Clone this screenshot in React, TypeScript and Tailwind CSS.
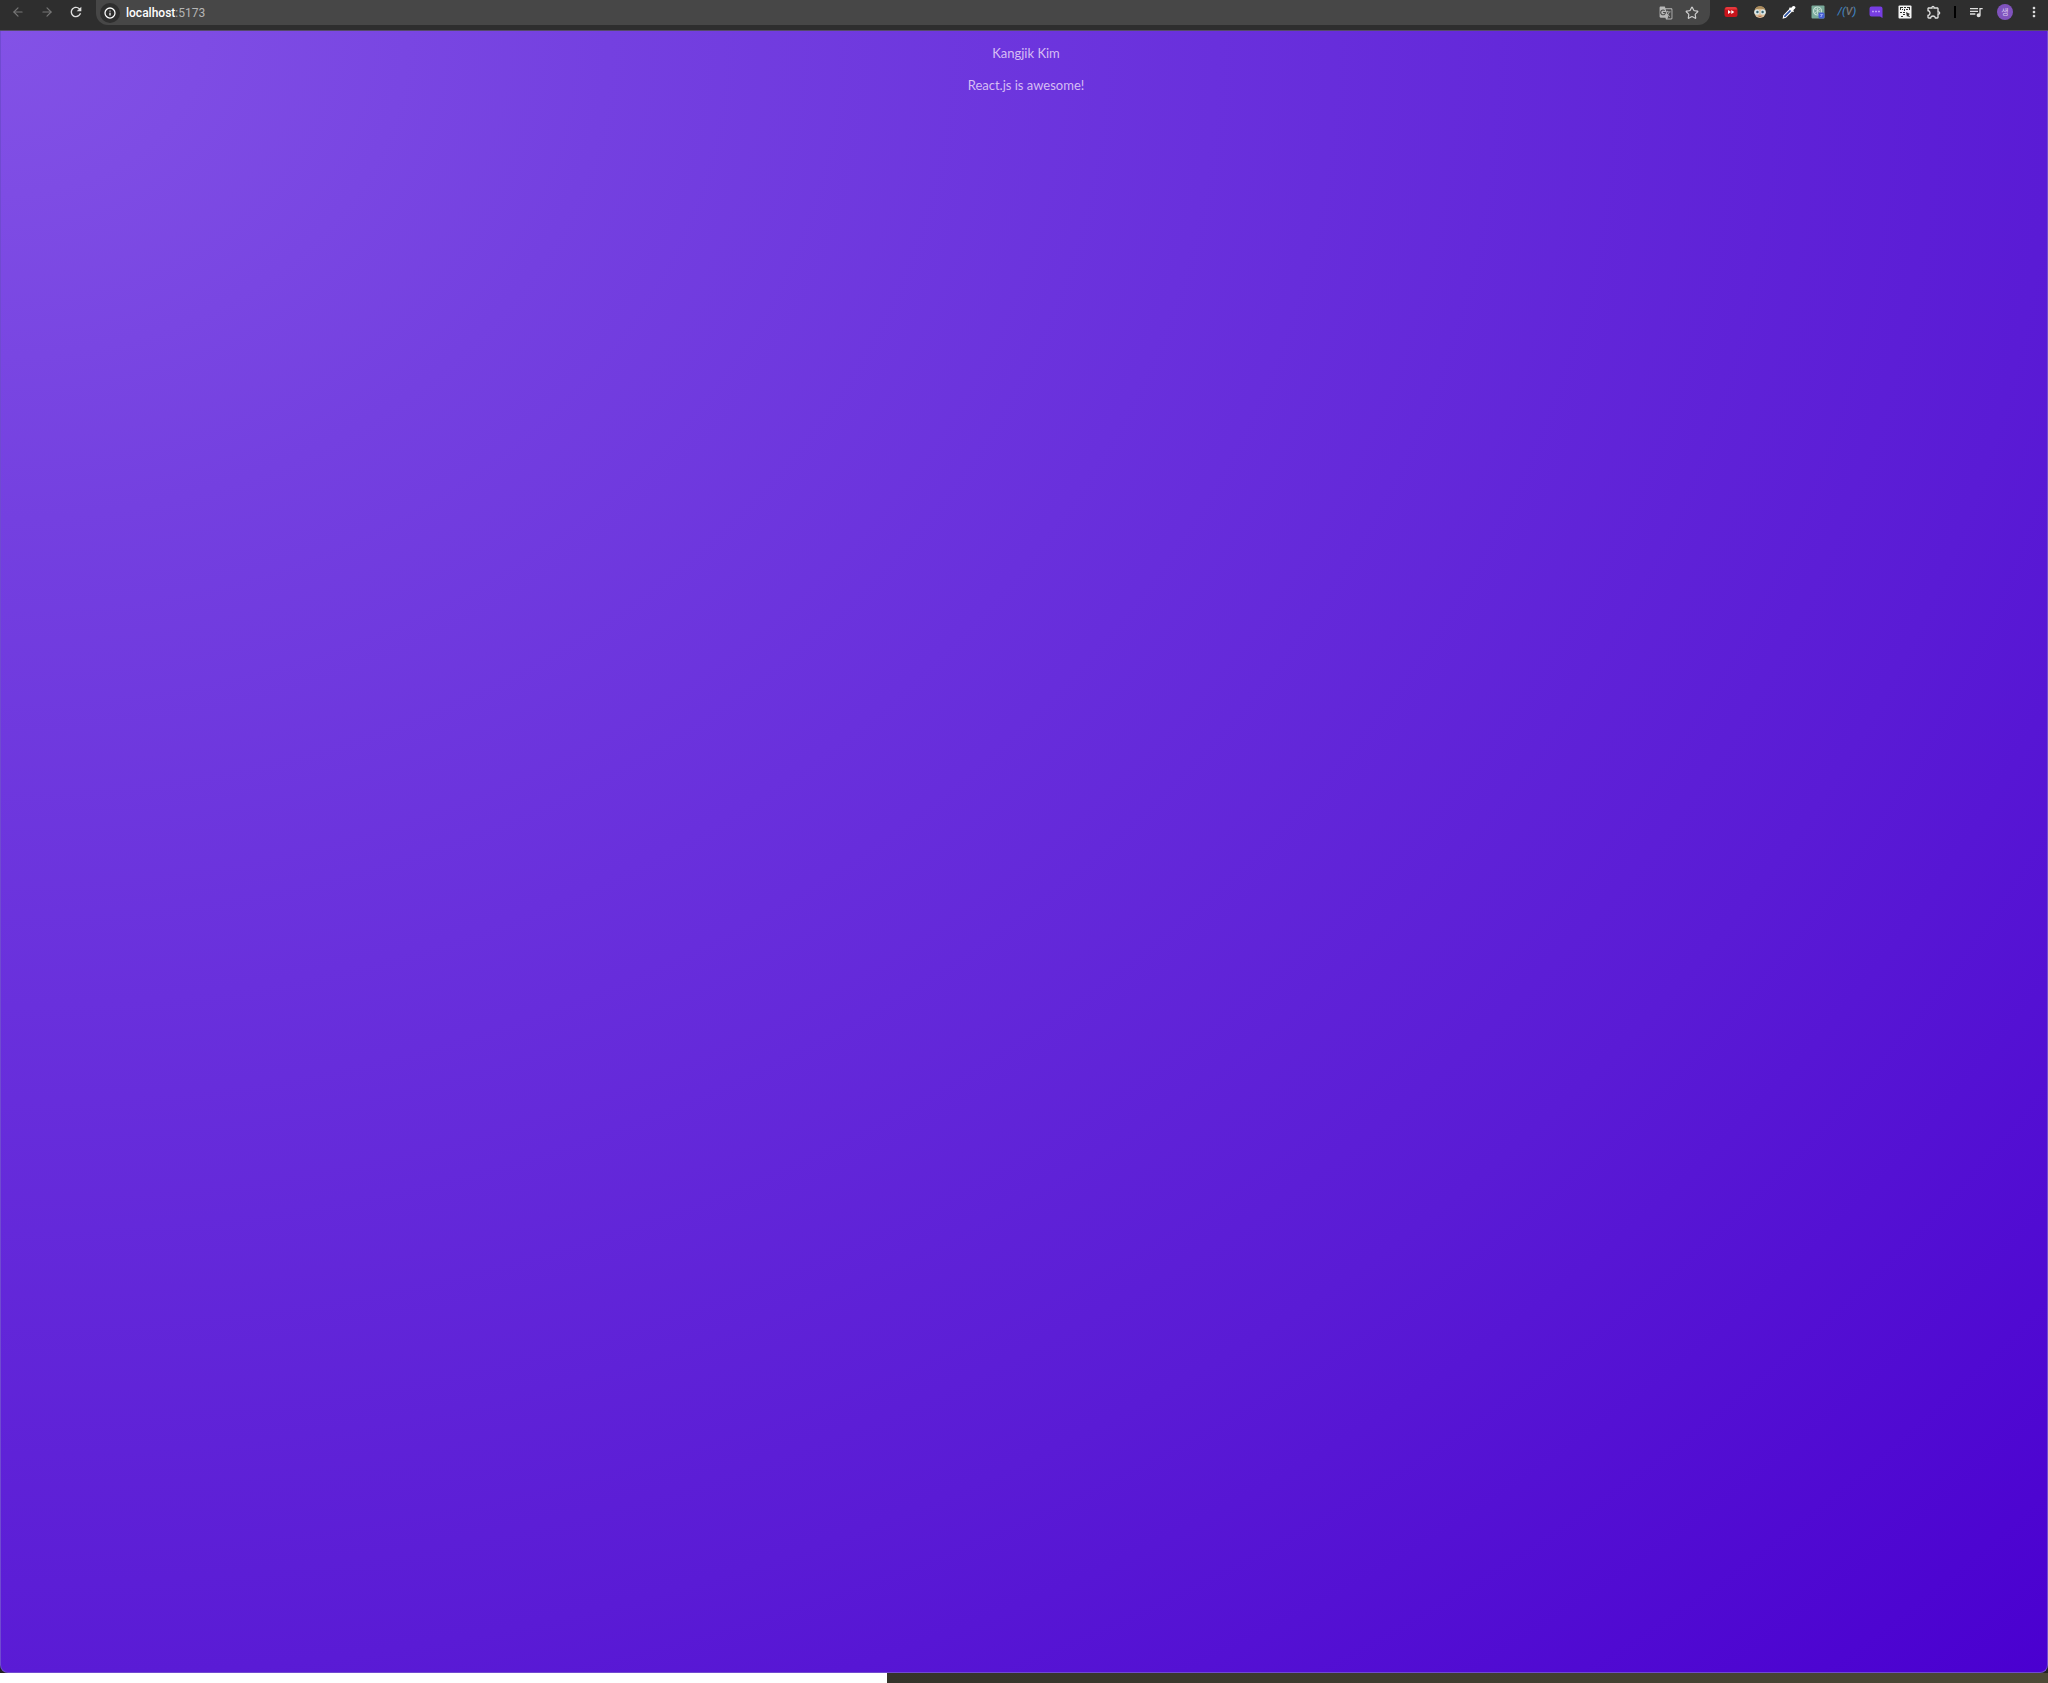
import { ArrowLeft, ArrowRight, Info, Star } from "lucide-react";
import type { ReactNode } from "react";
import { MdGTranslate, MdMoreVert, MdOutlineExtension, MdQueueMusic, MdRefresh } from "react-icons/md";

type IconButtonProps = { label: string; className?: string; children: ReactNode };

function IconButton({ label, className = "text-[#dedede]", children }: IconButtonProps) {
  return (
    <button type="button" aria-label={label} className={`flex size-5 shrink-0 items-center justify-center ${className}`}>
      {children}
    </button>
  );
}

function VideoIcon() {
  return (
    <svg viewBox="0 0 14 12" className="h-3 w-3.5">
      <rect x="0.5" y="1" width="13" height="10" rx="2.5" fill="#c9141c" />
      <path d="M1 3.5Q1 1 3 1h8q2 0 2 2.5Z" fill="#e5393d" />
      <path d="M4 4l3 2-3 2zM7.3 4l3 2-3 2z" fill="#fff" />
    </svg>
  );
}

function FaceIcon() {
  return (
    <svg viewBox="0 0 14 14" className="size-3.5">
      <circle cx="7" cy="7.2" r="5.8" fill="#dcc09c" />
      <path d="M1.8 4.8Q3 1 7 1t5.2 3.8Q7 2.6 1.8 4.8Z" fill="#a98a5c" />
      <circle cx="4" cy="7" r="2.6" fill="#d8e9ed" />
      <circle cx="10" cy="7" r="2.6" fill="#d8e9ed" />
      <circle cx="4.4" cy="7" r="1.2" fill="#3c6472" />
      <circle cx="9.6" cy="7" r="1.2" fill="#3c6472" />
      <path d="M4.5 10.8h5Q7 13 4.5 10.8Z" fill="#b0623f" />
    </svg>
  );
}

function PickerIcon() {
  return (
    <svg viewBox="0 0 14 14" className="size-3.5">
      <path d="M8 4l2 2-6.3 6.3-2.4.7.5-2.6Z" fill="#244b9c" stroke="#fff" strokeWidth="1.1" />
      <path d="M7 3.2l1-1 1 .9L10.7 1.3Q12 .4 13 1.5t0 2.1L11.2 5.3l.8 1-1 1Z" fill="#fff" />
    </svg>
  );
}

function AssistantIcon() {
  return (
    <svg viewBox="0 0 14 14" className="size-3.5">
      <rect x="0.5" y="0.5" width="13" height="13" rx="1" fill="#79aa9a" />
      <circle cx="6.5" cy="6" r="4" fill="none" stroke="#c6ded5" strokeWidth="1.2" />
      <path d="M4 4l5 3M4 8l5-4M6.5 3v6" stroke="#c6ded5" strokeWidth="0.8" />
      <rect x="7.5" y="7.5" width="6" height="6" rx="1.5" fill="#465fd3" />
      <path d="M9 9.5h3M10.5 9v3M9.2 12l2.5-2.5" stroke="#a7b5f5" strokeWidth="0.6" />
    </svg>
  );
}

function ChatIcon() {
  return (
    <svg viewBox="0 0 14 13" className="h-[13px] w-3.5">
      <path d="M2.5.5h9q2 0 2 2V12L11 10.5H2.5q-2 0-2-2v-6q0-2 2-2Z" fill="#773de3" />
      <path d="M3.3 4.8h1.4v1.4H3.3zM6.3 4.8h1.4v1.4H6.3zM9.3 4.8h1.4v1.4H9.3z" fill="#d5c0ff" />
    </svg>
  );
}

function CodeIcon() {
  return (
    <svg viewBox="0 0 14 14" className="size-3.5">
      <rect x="0.5" y="0.5" width="13" height="13" rx="1" fill="#f4f4f4" />
      <path
        d="M2 2h3v1H3v2H2zM4 4h1v1H4zM6 2h2v1H6zM9 2h3v3h-1V3H9zM6 4h1v2H6zM8 4h2v1H8zM2 7h2v1H2zM5 7h2v1H5zM2 9h1v3h2v-1H3V9zM5 9h2v1H5zM8 7l4 2-1.5 1 1.5 1.5-.8.8L9.7 11 9 12z"
        fill="#303030"
      />
    </svg>
  );
}

function Extensions() {
  return (
    <div className="flex items-center gap-[9px]">
      <IconButton label="Video speed"><VideoIcon /></IconButton>
      <IconButton label="Reader"><FaceIcon /></IconButton>
      <IconButton label="Color picker"><PickerIcon /></IconButton>
      <IconButton label="Assistant"><AssistantIcon /></IconButton>
      <IconButton label="Formula" className="font-[Roboto,sans-serif] text-[11px] font-medium italic text-[#3f82c0]">
        <span>/(</span><span className="text-[#777]">V</span><span>)</span>
      </IconButton>
      <IconButton label="Chat"><ChatIcon /></IconButton>
      <IconButton label="QR code"><CodeIcon /></IconButton>
      <IconButton label="Extensions"><MdOutlineExtension className="size-4" /></IconButton>
    </div>
  );
}

function Toolbar() {
  return (
    <header className="flex h-[31px] items-start border-b border-[#55496b] bg-[#2e2e2e] pr-1">
      <nav className="flex h-6 items-center gap-[9px] pl-2">
        <IconButton label="Back" className="text-[#777]"><ArrowLeft className="size-3.5" /></IconButton>
        <IconButton label="Forward" className="text-[#777]"><ArrowRight className="size-3.5" /></IconButton>
        <IconButton label="Reload"><MdRefresh className="size-4" /></IconButton>
      </nav>
      <div className="ml-2.5 flex h-[25px] min-w-0 flex-1 items-center rounded-b-xl bg-[#474747] pl-1 pr-2">
        <IconButton label="Site information" className="rounded-full bg-[#2e2e2e] text-white">
          <Info className="size-3" strokeWidth={2.5} />
        </IconButton>
        <p className="ml-1.5 flex-1 font-[Roboto,sans-serif] text-[12px] text-[#b5b5b5]">
          <span className="font-medium text-white">localhost</span>:5173
        </p>
        <div className="flex items-center gap-1.5">
          <IconButton label="Translate" className="text-[#b8b8b8]"><MdGTranslate className="size-3.5" /></IconButton>
          <IconButton label="Bookmark" className="text-[#cfcfcf]"><Star className="size-3.5" /></IconButton>
        </div>
      </div>
      <div className="flex h-6 items-center pl-[11px]">
        <Extensions />
        <span className="ml-2.5 h-3 w-0.5 bg-black" />
        <div className="ml-2.5 flex items-center gap-[9px]">
          <IconButton label="Media"><MdQueueMusic className="size-4" /></IconButton>
          <IconButton label="Profile">
            <span className="flex size-4 items-center justify-center rounded-full bg-[#8053bd] text-[8px] text-[#d9c9ef]">
              생
            </span>
          </IconButton>
          <IconButton label="Menu"><MdMoreVert className="size-4" /></IconButton>
        </div>
      </div>
    </header>
  );
}

export default function App() {
  return (
    <div className="flex min-h-screen flex-col bg-[#222] font-[Inter,'Noto_Sans_CJK_KR',sans-serif]">
      <Toolbar />
      <main className="flex-1 rounded-b-lg border-x border-b border-[#704bd0] bg-[radial-gradient(ellipse_farthest-corner_at_top_left,#8352e6_0%,#7440e0_21%,#6930dc_42%,#5a1bd5_71%,#4a00d0_100%)] pl-1 pt-3 text-center font-[Lato,sans-serif] text-[13px] leading-5 text-[#d6bdf4]">
        <p>Kangjik Kim</p>
        <p className="mt-3">React.js is awesome!</p>
      </main>
      <footer className="flex h-2.5">
        <div className="w-[43.3%] bg-white" />
        <div className="flex-1 bg-linear-to-r from-[#34332a] to-[#4c4936]" />
      </footer>
    </div>
  );
}
